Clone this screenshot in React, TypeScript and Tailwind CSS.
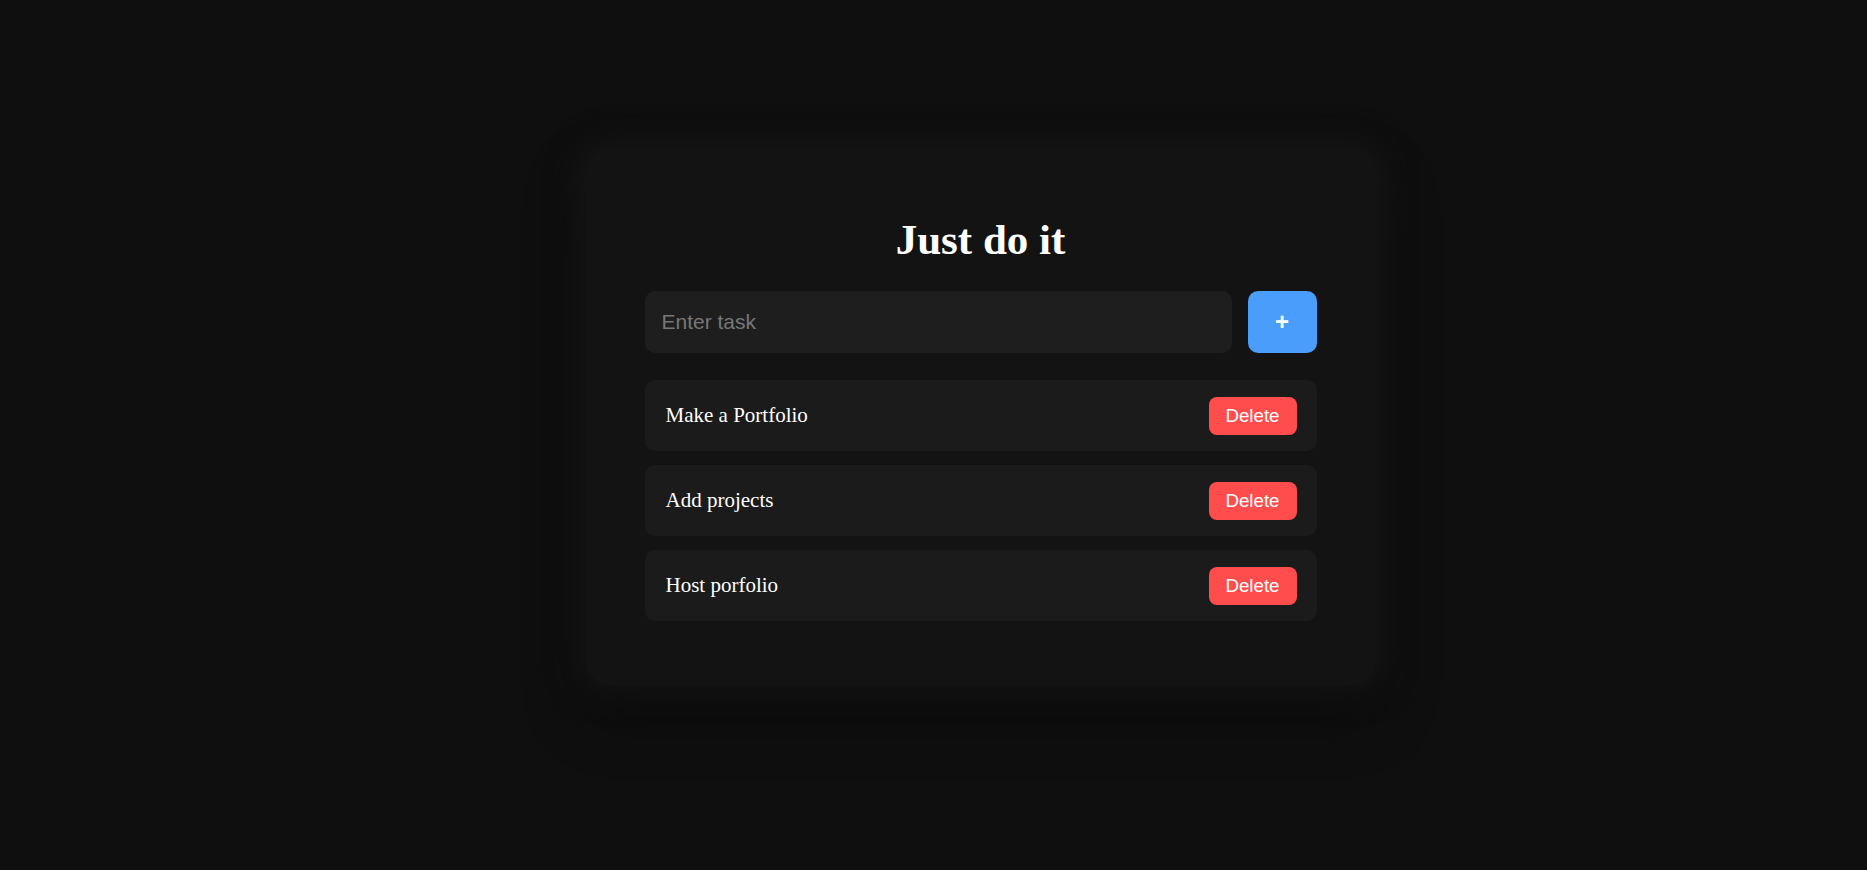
import { useState } from "react";

type Task = { id: number; text: string };

const initialTasks: Task[] = [
  { id: 1, text: "Make a Portfolio" },
  { id: 2, text: "Add projects" },
  { id: 3, text: "Host porfolio" },
];

export default function App() {
  const [tasks, setTasks] = useState<Task[]>(initialTasks);
  const [draft, setDraft] = useState("");

  const addTask = () => {
    if (!draft.trim()) return;
    setTasks([...tasks, { id: Date.now(), text: draft.trim() }]);
    setDraft("");
  };

  return (
    <main className="min-h-screen w-full bg-[#0f0f0f] pt-[149px] pl-[94px] [font-family:'Liberation_Serif',serif]">
      <section className="mx-auto w-[792px] rounded-[26px] bg-[#131313] px-[60px] pt-[66px] pb-[64px] shadow-[0_0_30px_8px_rgba(22,22,22,0.9),0_30px_60px_rgba(0,0,0,0.35)]">
        <h1 className="text-center text-[43px] font-bold leading-[1.15] text-white">Just do it</h1>

        <div className="mt-[27px] flex gap-4">
          <input
            value={draft}
            onChange={(e) => setDraft(e.target.value)}
            onKeyDown={(e) => e.key === "Enter" && addTask()}
            placeholder="Enter task"
            className="h-[62px] flex-1 rounded-[10px] bg-[#1e1e1e] px-[17px] text-[21px] text-white outline-none placeholder:text-[#777] [font-family:'Liberation_Sans',Arial,sans-serif]"
          />
          <button
            onClick={addTask}
            className="flex h-[62px] w-[69px] items-center justify-center rounded-[10px] bg-[#4a9dfa] text-[24px] font-bold text-white [font-family:'Liberation_Sans',Arial,sans-serif]"
          >
            +
          </button>
        </div>

        <ul className="mt-[27px] flex flex-col gap-[14px]">
          {tasks.map((task) => (
            <li
              key={task.id}
              className="flex h-[71px] items-center justify-between rounded-[10px] bg-[#1b1b1b] pl-[21px] pr-[20px]"
            >
              <span className="text-[21px] text-white">{task.text}</span>
              <button
                onClick={() => setTasks(tasks.filter((t) => t.id !== task.id))}
                className="h-[38px] w-[88px] rounded-[8px] bg-[#ff4d4d] text-[18.7px] text-white [font-family:'Liberation_Sans',Arial,sans-serif]"
              >
                Delete
              </button>
            </li>
          ))}
        </ul>
      </section>
    </main>
  );
}
